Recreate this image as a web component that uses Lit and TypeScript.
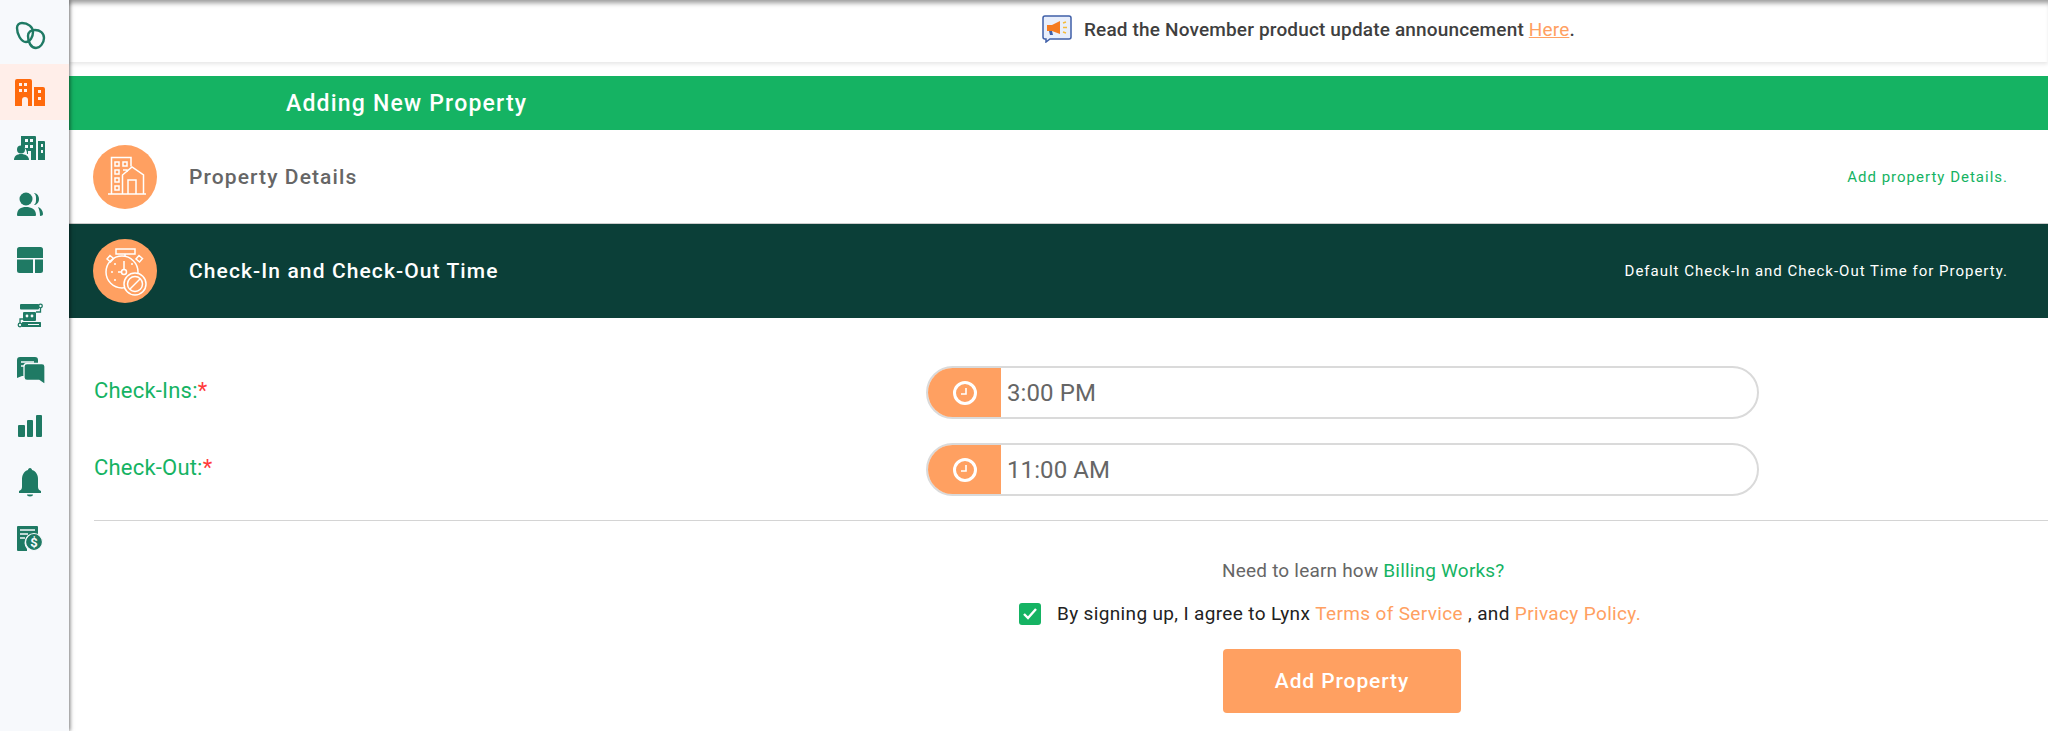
import { LitElement, html, css, svg } from "lit";
import { customElement } from "lit/decorators.js";

const G = "#1f7a64";
const BG = "#f7f9fc";
const sideIcons = [
  svg`<g fill="none" stroke="${G}" stroke-width="2.400"><path d="M3 8c0-3 2-5 5-5 6 0 11 4 11 9 0 5-3 10-7 10-5 0-9-8-9-14z"/><path d="M14 16c0-4 3-6 7-6 5 0 9 3 9 8 0 5-4 10-8 10-5 0-8-6-8-12z"/></g>`,
  svg`<path fill="#ff6a0d" fill-rule="evenodd" d="M1 5a2 2 0 0 1 2-2h13a2 2 0 0 1 2 2v25h-4v-6a3 3 0 0 0-6 0v6H1zM5 7v3h3V7zm5 0v3h3V7zM5 13v3h3v-3zm5 0v3h3v-3zM20 11h9a2 2 0 0 1 2 2v17H20zm4 3v3h3v-3zm0 7v3h3v-3z"/>`,
  svg`<path fill="${G}" fill-rule="evenodd" d="M7 4h14a1 1 0 0 1 1 1v23h-5v-6h-4c0-4-2-7-6-8zm4 3v3h3V7zm5 0v3h3V7zm-5 6v3h3v-3zm5 0v3h3v-3zm-2 6v3h3v-3zM24 9h6a1 1 0 0 1 1 1v18h-7zm3 3v3h2v-3zm0 6v3h2v-3z"/><circle fill="${G}" cx="7" cy="17.500" r="4"/><path fill="${G}" d="M0 28c0-4 3-6 7-6s8 2 8 6z"/>`,
  svg`<circle fill="${G}" cx="12" cy="11" r="6.500"/><path fill="${G}" d="M3 27c0-6 4-8 9-8s10 2 10 8c0 1-1 1-2 1H5c-1 0-2 0-2-1z"/><path fill="${G}" d="M20 5c2 0 5 2 5 6s-3 6-5 6c2-2 2-3 2-6s0-4-2-6zM24 19c3 1 5 4 5 7 0 1-1 2-3 2 0-4-1-7-2-9z"/>`,
  svg`<path fill="${G}" d="M5.500 3h21A2.500 2.500 0 0 1 29 5.500V14H3V5.500A2.500 2.500 0 0 1 5.500 3zM3 15.500h16V29H5.500A2.500 2.500 0 0 1 3 26.500zM21 15.500h8v11a2.500 2.500 0 0 1-2.500 2.500H21z"/>`,
  svg`<rect fill="${G}" x="6" y="4" width="19" height="5.500" rx="1"/><rect fill="${G}" x="9" y="12" width="13" height="9" rx="1"/><circle cx="13" cy="16" r="1.400" fill="${BG}"/><circle cx="18" cy="16" r="1.400" fill="${BG}"/><rect fill="${G}" x="8" y="22" width="19" height="5" rx=".5"/><path stroke="${BG}" d="M14 24.500h11"/><g fill="none" stroke="${G}" stroke-width="1.300"><circle cx="26.500" cy="6" r="1.800"/><circle cx="6" cy="25" r="1.800"/><path d="M26.500 8v4H22M6 23v-4h3"/></g>`,
  svg`<path fill="${G}" d="M6 1h15a3 3 0 0 1 3 3v13a3 3 0 0 1-3 3H8l-5 2V4a3 3 0 0 1 3-3z"/><path stroke="${BG}" stroke-width="1.300" d="M7 6h13M7 10h13"/><path fill="${G}" stroke="${BG}" stroke-width="1.300" d="M13 8h15a3 3 0 0 1 3 3v18l-6-4H13a3 3 0 0 1-3-3V11a3 3 0 0 1 3-3z" transform="translate(0 -.500)"/>`,
  svg`<rect fill="${G}" x="4" y="13" width="7" height="12" rx="1"/><rect fill="${G}" x="13" y="8" width="6" height="17" rx="1"/><rect fill="${G}" x="22" y="3" width="6" height="22" rx="1"/>`,
  svg`<path fill="${G}" d="M16 0c1.200 0 2 1 2 2 4 1 6 5 6 9v8c0 2 1 3 3 4v2H5v-2c2-1 3-2 3-4v-8c0-4 2-8 6-9 0-1 .8-2 2-2zM13 26.500h6c0 1-1 2-3 2s-3-1-3-2z"/>`,
  svg`<path fill="${G}" d="M4 2h19a1 1 0 0 1 1 1v8a9 9 0 0 0-11 14v2H4a1 1 0 0 1-1-1V3a1 1 0 0 1 1-1z"/><path stroke="${BG}" stroke-width="1.400" d="M6 6h15M6 10h8M6 14h5"/><circle cx="20" cy="18" r="8.500" fill="${G}" stroke="${BG}" stroke-width="1.200"/><text x="20" y="23" text-anchor="middle" font-family="Roboto, sans-serif" font-size="13" font-weight="700" fill="${BG}">$</text>`,
];

const clock = html`<svg width="26" height="26" viewBox="0 0 26 26" fill="none" stroke="#fff"><circle cx="13" cy="13" r="10.500" stroke-width="3"/><path d="M14 8v6H9" stroke-width="1.600"/></svg>`;

const buildingIcon = html`<svg width="64" height="64" viewBox="1 1 64 64"><circle cx="33" cy="33" r="32" fill="#ffa061"/><g fill="none" stroke="#fff" stroke-width="1.500"><path d="M19.500 50V13.500h19.500v9M16 50h38"/><path d="M30.500 50V31l9.500-8 11.500 8v19M36 50V36h8v14"/><path d="M23 18h4v4h-4zM31 18h4v4h-4zM23 26h4v4h-4zM31 26h4v2M23 34h4v4h-4zM23 42h4v4h-4z"/></g></svg>`;
const timerIcon = html`<svg width="64" height="64" viewBox="1 1 64 64"><circle cx="33" cy="33" r="32" fill="#ffa061"/><g fill="none" stroke="#fff" stroke-width="1.500"><path d="M24 11h19v5H24zM33 16v2"/><circle cx="30" cy="34" r="16"/><path d="M15 21l3-3.500 3.500 3-3 3.500zM47 17.500l3.500 3-3 3.500-3.500-3z"/><path d="M32 23v9M26 34h3"/><circle cx="32" cy="34" r="2.500"/><circle cx="43" cy="46" r="11" fill="#ffa061"/><circle cx="43" cy="46" r="7.500"/><path d="M38 51l10-10"/></g><g fill="#fff"><circle cx="20" cy="34" r="1"/><circle cx="23" cy="26" r="1"/><circle cx="23" cy="42" r="1"/><circle cx="40" cy="26" r="1"/></g></svg>`;

@customElement("app-root")
export class AppRoot extends LitElement {
  static styles = css`
    :host { display: flex; width: 2048px; height: 731px; overflow: hidden; background: #fff; font-family: Roboto, "Liberation Sans", sans-serif; color: #666; }
    a { text-decoration: none; }
    .side { width: 69px; flex: none; background: #f7f9fc; padding-top: 8px; box-sizing: border-box; box-shadow: 1px 0 4px rgba(0,0,0,.55); z-index: 2; }
    .item { height: 56px; display: flex; align-items: center; padding-left: 14px; box-sizing: border-box; }
    .item.on { background: #ffeee9; }
    .item svg { display: block; }
    .main { flex: 1; min-width: 0; }
    .notice { height: 62px; display: flex; align-items: center; gap: 12px; padding: 0 0 4px 973px; box-sizing: border-box; font-size: 19px; letter-spacing: .16px; font-weight: 500; color: #3f3f3f; box-shadow: inset 0 6px 5px -3px rgba(0,0,0,.4), 0 2px 4px rgba(0,0,0,.1); }
    .notice svg { flex: none; }
    .notice a { color: #ffa061; text-decoration: underline; font-weight: 400; }
    .title { margin-top: 14px; height: 54px; background: #15b363; color: #fff; font-size: 23px; font-weight: 500; letter-spacing: 1.200px; display: flex; align-items: center; padding-left: 217px; }
    .step { height: 94px; display: flex; align-items: center; padding: 0 40px 0 24px; box-sizing: border-box; }
    .step svg { flex: none; margin-right: 32px; }
    .step .name { flex: 1; font-size: 21px; font-weight: 500; letter-spacing: 1.100px; }
    .step .note { font-size: 15px; letter-spacing: 1px; }
    .one { color: #666; border-bottom: 1px solid #ccc; }
    .one .note { color: #15b363; }
    .two { background: #0b3f38; color: #fff; }
    .form { padding: 48px 0 0 25px; }
    .row { display: flex; align-items: center; height: 53px; margin-bottom: 24px; }
    .row label { width: 832px; flex: none; color: #15b363; font-size: 22px; letter-spacing: .2px; padding-bottom: 4px; }
    .row label i { color: #ff3b3b; font-style: normal; }
    .field { width: 833px; height: 53px; box-sizing: border-box; border: 2px solid #dadada; border-radius: 27px; overflow: hidden; display: flex; align-items: center; font-size: 24px; letter-spacing: .1px; color: #666; }
    .addon { width: 73px; height: 100%; background: #ffa061; display: flex; align-items: center; justify-content: center; margin-right: 6px; }
    .rule { border-top: 1px solid #d4d4d4; }
    .foot { display: flex; flex-direction: column; align-items: flex-start; }
    .learn { margin: 38px 0 0 1128px; font-size: 19px; letter-spacing: .2px; color: #666; line-height: 24px; }
    .learn a { color: #15b363; }
    .agree { margin: 19px 0 0 925px; display: flex; align-items: center; font-size: 19px; letter-spacing: .35px; color: #222; line-height: 24px; }
    .box { width: 22px; height: 22px; border-radius: 3px; background: #15b363; display: flex; align-items: center; justify-content: center; margin-right: 16px; }
    .agree a { color: #ffa061; }
    .btn { margin: 23px 0 0 1129px; width: 238px; height: 64px; border: 0; border-radius: 4px; background: #ffa061; color: #fff; font: 500 21px Roboto, sans-serif; letter-spacing: .9px; }
  `;
  render() {
    return html`
      <nav class="side">
        ${sideIcons.map((s, i) => html`<div class="item ${i === 1 ? "on" : ""}"><svg width="32" height="32" viewBox="0 0 32 32">${s}</svg></div>`)}
      </nav>
      <main class="main">
        <div class="notice">
          <svg width="30" height="28" viewBox="0 0 30 28"><path d="M3 1h24a2 2 0 0 1 2 2v19a2 2 0 0 1-2 2H8l-4 3v-3H3a2 2 0 0 1-2-2V3a2 2 0 0 1 2-2z" fill="#e8eefb" stroke="#3f5fa8" stroke-width="1.500"/><path d="M5 10h5l8-4v13l-8-3H5z" fill="#f57a1f"/><path d="M7 16l1 4h3l-1-4z" fill="#3f5fa8"/><path d="M21 8l3-1M21 12.500h4M21 17l3 1" stroke="#f4bb3a" stroke-width="1.500"/></svg>
          <span>Read the November product update announcement <a href="#">Here</a>.</span>
        </div>
        <div class="title">Adding New Property</div>
        <div class="step one">${buildingIcon}<span class="name">Property Details</span><span class="note">Add property Details.</span></div>
        <div class="step two">${timerIcon}<span class="name">Check-In and Check-Out Time</span><span class="note">Default Check-In and Check-Out Time for Property.</span></div>
        <div class="form">
          <div class="row"><label>Check-Ins:<i>*</i></label><div class="field"><span class="addon">${clock}</span>3:00 PM</div></div>
          <div class="row"><label>Check-Out:<i>*</i></label><div class="field"><span class="addon">${clock}</span>11:00 AM</div></div>
          <div class="rule"></div>
          <div class="foot">
            <div class="learn">Need to learn how <a href="#">Billing Works?</a></div>
            <div class="agree"><span class="box"><svg width="16" height="14" viewBox="0 0 16 14" fill="none" stroke="#fff" stroke-width="2.400"><path d="M2 7l4 4 8-9"/></svg></span>By signing up, I agree to Lynx&nbsp;<a href="#">Terms of Service</a>&nbsp;, and&nbsp;<a href="#">Privacy Policy.</a></div>
            <button class="btn">Add Property</button>
          </div>
        </div>
      </main>
    `;
  }
}
